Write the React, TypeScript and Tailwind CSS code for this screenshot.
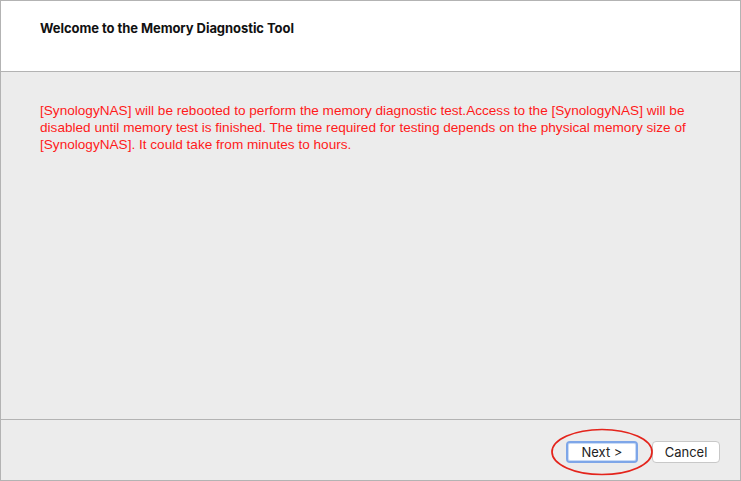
import React from 'react'

const ui = { fontFamily: 'Inter, "Liberation Sans", Arial, sans-serif' }
const body = { fontFamily: '"Liberation Sans", Arial, sans-serif' }

export default function App() {
  return (
    <div
      className="w-[741px] h-[481px] flex flex-col border border-[#b3b3b3] bg-[#ececec] text-[13px]"
      style={ui}
    >
      {/* header */}
      <div className="h-[71px] shrink-0 bg-white border-b border-[#b3b3b3] px-[39px] pt-[19px]">
        <h1 className="font-bold text-[13px] leading-[16px] tracking-[-0.06px] text-[#111]">
          Welcome to the Memory Diagnostic Tool
        </h1>
      </div>

      {/* body */}
      <div className="flex-1 px-[39px] pt-[30px]">
        <p className="text-[#ff1a1a] text-[13.6px] leading-[17px]" style={body}>
          [SynologyNAS] will be rebooted to perform the memory diagnostic test.Access to the [SynologyNAS] will be
          disabled until memory test is finished. The time required for testing depends on the physical memory size of
          [SynologyNAS]. It could take from minutes to hours.
        </p>
      </div>

      {/* footer */}
      <div className="h-[61px] shrink-0 border-t border-[#b3b3b3] flex items-start justify-end gap-[14px] pr-[20px] pt-[21px]">
        <div className="relative">
          <button className="w-[72px] h-[22px] rounded-[4px] bg-white border-2 border-[#7ea6e8] shadow-[inset_0_0_0_1px_#c9dbf6] text-[#222] leading-none">
            Next &gt;
          </button>
          <svg
            className="absolute left-[-16px] top-[-13px] pointer-events-none"
            width="104"
            height="48"
            viewBox="0 0 104 48"
          >
            <ellipse cx="52" cy="24" rx="50" ry="22.5" fill="none" stroke="#e4241c" strokeWidth="1.7" />
          </svg>
        </div>
        <button className="w-[68px] h-[22px] rounded-[4px] bg-white border border-[#c8c8c8] text-[#222] leading-none">
          Cancel
        </button>
      </div>
    </div>
  )
}
